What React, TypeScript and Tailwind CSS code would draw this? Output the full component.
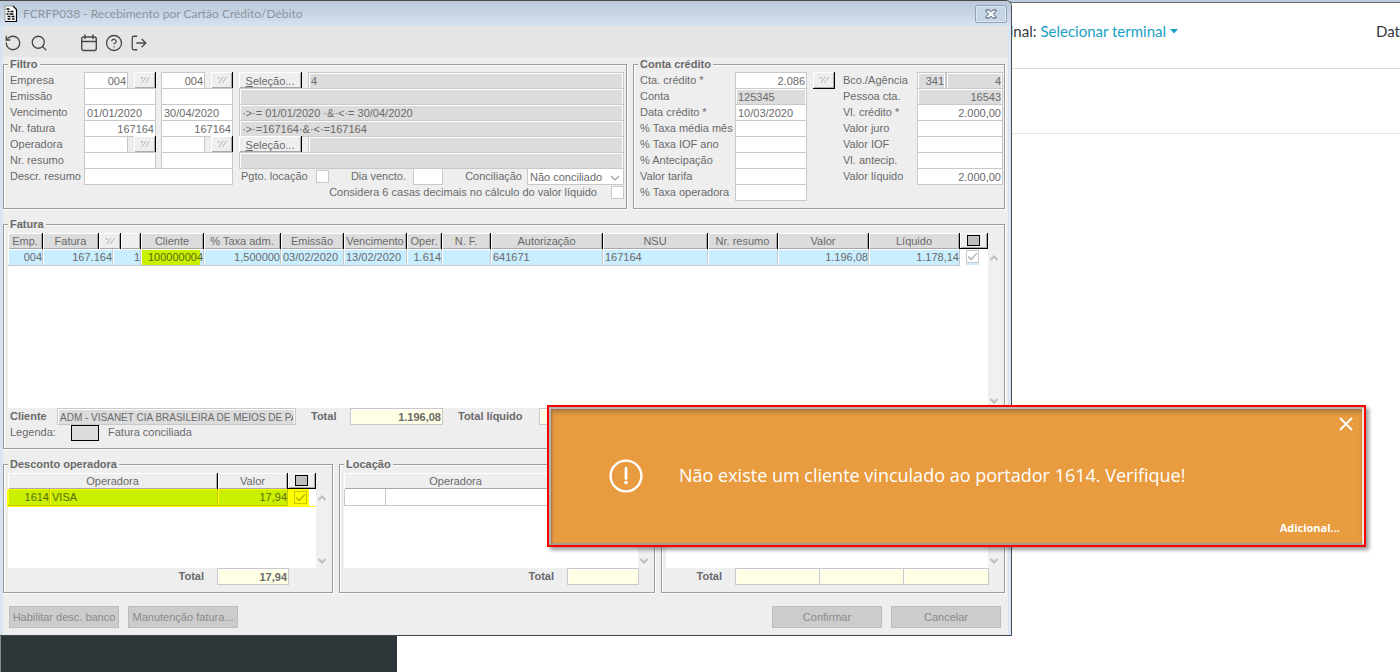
import React from "react";
import { RotateCcw, Search, CircleHelp, LogOut } from "lucide-react";
import clsx from "clsx";

type FieldProps = {
  label: string;
  value?: string;
  right?: boolean;
  gray?: boolean;
  total?: boolean;
  small?: boolean;
  className?: string;
};

function Field({ label, value = "", right, gray, total, small, className }: FieldProps) {
  return (
    <input
      aria-label={label}
      defaultValue={value}
      readOnly={gray || total}
      className={clsx(
        "block h-[17px] min-w-0 rounded-none border border-[#c8c8c8] pt-px leading-[14px] outline-none",
        small ? "text-[10px]" : "text-[11px]",
        right ? "pr-px pl-[2px] text-right" : "px-[2px]",
        gray && "bg-[#dcdcdc] shadow-[inset_1px_1px_0_#fff,inset_-1px_0_0_#fff]",
        total && "bg-[#ffffe6] font-bold shadow-[inset_1px_1px_0_#fff]",
        !gray && !total && "bg-white",
        className
      )}
    />
  );
}

function Wand() {
  return (
    <svg viewBox="0 0 10 8" className="h-2 w-[10px]" fill="none" stroke="#a2a2a2" strokeWidth="1">
      <path d="M1 1l1.6 2" />
      <path d="M5.8 1.2L2 6.8M9.4 1.2L5.6 6.8" strokeDasharray="1.8 0.7" />
    </svg>
  );
}

function LookupButton({ label, full }: { label: string; full?: boolean }) {
  return (
    <button
      type="button"
      aria-label={label}
      className={clsx(
        "flex w-[22px] shrink-0 items-center justify-center border-r border-black bg-[#eee] shadow-[inset_1px_1px_0_#fff,inset_-1px_-1px_0_#a8a8a8]",
        full ? "h-[17px] border-b" : "h-4"
      )}
    >
      <Wand />
    </button>
  );
}

function CheckBox({ label, checked, yellow }: { label: string; checked?: boolean; yellow?: boolean }) {
  return (
    <label className="relative block size-[13px] shrink-0">
      <input
        type="checkbox"
        aria-label={label}
        defaultChecked={checked}
        className={clsx(
          "peer block size-[13px] appearance-none border",
          yellow ? "border-[#c8c800] bg-[#ff0]" : "border-[#c8c8c8] bg-white"
        )}
      />
      <svg
        viewBox="0 0 13 13"
        className="pointer-events-none absolute inset-0 hidden size-[13px] peer-checked:block"
        fill="none"
        stroke={yellow ? "#b4b000" : "#b0b0b0"}
        strokeWidth="1.3"
      >
        <path d="M2.2 6.5l3 3L11 3.2" />
      </svg>
    </label>
  );
}

function Group({ title, className, children }: { title?: string; className?: string; children: React.ReactNode }) {
  return (
    <fieldset
      className={clsx(
        "min-w-0 border border-[#9c9c9c] pb-2 pl-1 shadow-[1px_1px_0_#fff,inset_1px_1px_0_#fff]",
        className
      )}
    >
      <legend className="h-[14px] bg-[#eee] px-[2px] text-[11px] leading-[14px] font-bold">{title}</legend>
      {children}
    </fieldset>
  );
}

function Row({ label, wide, children }: { label: string; wide?: boolean; children: React.ReactNode }) {
  return (
    <div className="flex h-4 items-start">
      <span className={clsx("shrink-0 whitespace-nowrap leading-4", wide ? "w-[95px]" : "w-[74px]")}>{label}</span>
      {children}
    </div>
  );
}

function RangeRow({ label, from = "", to = "", right, lookup }: { label: string; from?: string; to?: string; right?: boolean; lookup?: boolean }) {
  return (
    <Row label={label}>
      <div className="flex gap-[5px]">
        {[from, to].map((v, i) => (
          <div key={i} className="flex w-[72px] justify-between">
            <Field
              label={label + (i ? " final" : " inicial")}
              value={v}
              right={right}
              className={lookup ? "w-[44px]" : "w-full"}
            />
            {lookup && <LookupButton label={"Buscar " + label} />}
          </div>
        ))}
      </div>
    </Row>
  );
}

function SelectButton() {
  return (
    <button
      type="button"
      className="h-4 w-[63px] shrink-0 border-r border-black bg-[#eee] pt-[2px] text-center leading-[14px] shadow-[inset_1px_1px_0_#fff,inset_-1px_-1px_0_#a8a8a8]"
    >
      <span className="underline">S</span>eleção...
    </button>
  );
}

function Th({ children, span = 1, light }: { children?: React.ReactNode; span?: number; light?: boolean }) {
  return (
    <th
      colSpan={span}
      className={clsx(
        "h-4 overflow-hidden border-r border-black p-0 text-center leading-[15px] font-normal whitespace-nowrap shadow-[inset_1px_1px_0_#fff,inset_-1px_-1px_0_#a8a8a8]",
        light ? "bg-[#eee]" : "bg-[#dcdcdc]"
      )}
    >
      {children}
    </th>
  );
}

function AllButton() {
  return (
    <th className="h-4 border-r border-b border-black bg-[#eee] p-0 shadow-[inset_1px_1px_0_#fff,inset_-1px_-1px_0_#a8a8a8]">
      <button type="button" aria-label="Marcar todos" className="mx-auto block h-[11px] w-[13px] border border-black bg-[#bdbdbd]" />
    </th>
  );
}

function ScrollBar() {
  return (
    <div className="mt-4 flex w-[13px] shrink-0 flex-col items-center justify-between bg-[#f0f0f0] pt-[6px] pr-px pb-1">
      <svg viewBox="0 0 8 6" className="h-[6px] w-2" fill="none" stroke="#bdbdbd" strokeWidth="2">
        <path d="M0.5 5L4 1.5L7.5 5" />
      </svg>
      <svg viewBox="0 0 8 6" className="h-[6px] w-2" fill="none" stroke="#bdbdbd" strokeWidth="2">
        <path d="M0.5 1L4 4.5L7.5 1" />
      </svg>
    </div>
  );
}

const invoiceCols = [
  "w-[35px]", "w-[56px]", "w-[14px]", "w-[8px]", "w-[20px]", "w-[63px]", "w-[77px]", "w-[63px]", "w-[63px]",
  "w-[35px]", "w-[49px]", "w-[112px]", "w-[105px]", "w-[70px]", "w-[91px]", "w-[91px]", "w-[28px]",
];

const invoiceCells: { text: string; right?: boolean; span?: number; mark?: boolean }[] = [
  { text: "004", right: true },
  { text: "167.164", right: true, span: 2 },
  { text: "1", right: true, span: 2 },
  { text: "100000004", right: true, mark: true },
  { text: "1,500000", right: true },
  { text: "03/02/2020" },
  { text: "13/02/2020" },
  { text: "1.614", right: true },
  { text: "" },
  { text: "641671" },
  { text: "167164" },
  { text: "" },
  { text: "1.196,08", right: true },
  { text: "1.178,14", right: true },
];

function InvoiceTable() {
  return (
    <table className="w-full table-fixed border-separate border-spacing-0">
      <colgroup>
        {invoiceCols.map((c, i) => (
          <col key={i} className={c} />
        ))}
      </colgroup>
      <thead>
        <tr>
          <Th>Emp.</Th>
          <Th>Fatura</Th>
          <Th span={2} light>
            <span className="flex justify-center"><Wand /></span>
          </Th>
          <Th light />
          <Th>Cliente</Th>
          <Th>% Taxa adm.</Th>
          <Th>Emissão</Th>
          <Th>Vencimento</Th>
          <Th>Oper.</Th>
          <Th>N. F.</Th>
          <Th>Autorização</Th>
          <Th>NSU</Th>
          <Th>Nr. resumo</Th>
          <Th>Valor</Th>
          <Th>Líquido</Th>
          <AllButton />
        </tr>
      </thead>
      <tbody>
        <tr>
          {invoiceCells.map((c, i) => (
            <td
              key={i}
              colSpan={c.span ?? 1}
              className={clsx(
                "h-[17px] border-r border-b border-[#c8c8c8] py-0 leading-4 whitespace-nowrap shadow-[inset_1px_1px_0_#fff]",
                c.right ? "px-0 text-right" : "px-[2px]",
                c.mark ? "bg-[linear-gradient(90deg,#c8f000_59px,#c8eeff_59px)] text-[#5f6a10]" : "bg-[#c8eeff]"
              )}
            >
              {c.text}
            </td>
          ))}
          <td className="p-0 pl-[6px]">
            <div className="w-[13px] bg-[#c8eeff] pb-[2px]">
              <CheckBox label="Selecionar fatura 167.164" checked />
            </div>
          </td>
        </tr>
      </tbody>
    </table>
  );
}

const yellowCell = "h-[17px] border-r border-b border-[#c8c800] bg-[#c8f000] py-0 leading-4 text-[#5f6a10] shadow-[inset_1px_1px_0_#ff0]";

function FooterButton({ children }: { children: string }) {
  return (
    <button type="button" className="h-[22px] w-[110px] border border-[#bdbdbd] bg-[#ccc] text-[#8a8a8a] whitespace-nowrap">
      {children}
    </button>
  );
}

function FilterGroup() {
  return (
    <Group title="Filtro" className="pr-[2px]">
      <div className="flex gap-[6px] pt-px pl-[2px]">
        <div className="shrink-0">
          <RangeRow label="Empresa" from="004" to="004" right lookup />
          <RangeRow label="Emissão" />
          <RangeRow label="Vencimento" from="01/01/2020" to="30/04/2020" />
          <RangeRow label="Nr. fatura" from="167164" to="167164" right />
          <RangeRow label="Operadora" lookup />
          <RangeRow label="Nr. resumo" />
          <Row label="Descr. resumo">
            <Field label="Descr. resumo" className="w-[149px]" />
          </Row>
        </div>
        <div className="min-w-0 flex-1">
          <div className="flex h-4 items-start gap-[6px]">
            <SelectButton />
            <Field label="Seleção de empresa" value="4" gray className="flex-1" />
          </div>
          <div className="h-4"><Field label="Seleção de emissão" gray className="w-full" /></div>
          <div className="h-4"><Field label="Seleção de vencimento" value="·>·= 01/01/2020 ·&·<·= 30/04/2020" gray className="w-full" /></div>
          <div className="h-4"><Field label="Seleção de fatura" value="·>·=167164·&·<·=167164" gray className="w-full" /></div>
          <div className="flex h-4 items-start gap-[6px]">
            <SelectButton />
            <Field label="Seleção de operadora" gray className="flex-1" />
          </div>
          <div className="h-4"><Field label="Seleção de resumo" gray className="w-full" /></div>
          <div className="flex h-4 items-start justify-between pl-[2px] leading-4">
            <div className="flex items-start gap-2 whitespace-nowrap">
              Pgto. locação
              <div className="pt-[2px]"><CheckBox label="Pgto. locação" /></div>
            </div>
            <div className="flex items-start gap-[7px] whitespace-nowrap">
              Dia vencto.
              <Field label="Dia vencto." className="w-[30px]" />
            </div>
            <div className="flex items-start gap-[5px]">
              Conciliação
              <div className="relative">
                <select aria-label="Conciliação" className="block h-[17px] w-[97px] appearance-none rounded-none border border-[#c8c8c8] bg-white px-[2px] text-[11px] leading-[14px]">
                  <option>Não conciliado</option>
                </select>
                <svg viewBox="0 0 10 6" className="pointer-events-none absolute top-[7px] right-1 h-[6px] w-[10px]" fill="none" stroke="#a0a0a0" strokeWidth="1.2">
                  <path d="M1 1l4 4 4-4" />
                </svg>
              </div>
            </div>
          </div>
          <div className="flex h-4 items-start justify-end gap-[14px] leading-4 whitespace-nowrap">
            Considera 6 casas decimais no cálculo do valor líquido
            <div className="pt-[2px]"><CheckBox label="Considera 6 casas decimais no cálculo do valor líquido" /></div>
          </div>
        </div>
      </div>
    </Group>
  );
}

function AccountGroup() {
  return (
    <Group title="Conta crédito" className="pr-px">
      <div className="flex justify-between pt-px pl-[2px]">
        <div>
          <Row wide label="Cta. crédito *">
            <div className="flex gap-[6px]">
              <Field label="Cta. crédito" value="2.086" right className="w-[72px]" />
              <LookupButton label="Buscar conta" full />
            </div>
          </Row>
          <Row wide label="Conta"><Field label="Conta" value="125345" gray className="w-[72px]" /></Row>
          <Row wide label="Data crédito *"><Field label="Data crédito" value="10/03/2020" className="w-[72px]" /></Row>
          <Row wide label="% Taxa média mês"><Field label="% Taxa média mês" className="w-[72px]" /></Row>
          <Row wide label="% Taxa IOF ano"><Field label="% Taxa IOF ano" className="w-[72px]" /></Row>
          <Row wide label="% Antecipação"><Field label="% Antecipação" className="w-[72px]" /></Row>
          <Row wide label="Valor tarifa"><Field label="Valor tarifa" className="w-[72px]" /></Row>
          <Row wide label="% Taxa operadora"><Field label="% Taxa operadora" className="w-[72px]" /></Row>
        </div>
        <div>
          <Row label="Bco./Agência">
            <Field label="Banco" value="341" right gray className="w-[29px]" />
            <Field label="Agência" value="4" right gray className="w-[57px]" />
          </Row>
          <Row label="Pessoa cta."><Field label="Pessoa cta." value="16543" right gray className="w-[86px]" /></Row>
          <Row label="Vl. crédito *"><Field label="Vl. crédito" value="2.000,00" right className="w-[86px]" /></Row>
          <Row label="Valor juro"><Field label="Valor juro" className="w-[86px]" /></Row>
          <Row label="Valor IOF"><Field label="Valor IOF" className="w-[86px]" /></Row>
          <Row label="Vl. antecip."><Field label="Vl. antecip." className="w-[86px]" /></Row>
          <Row label="Valor líquido"><Field label="Valor líquido" value="2.000,00" right className="w-[86px]" /></Row>
        </div>
      </div>
    </Group>
  );
}

function InvoiceGroup() {
  return (
    <Group title="Fatura" className="pr-[3px]">
      <div className="flex h-[177px] pt-[2px]">
        <div className="min-w-0 flex-1 bg-[linear-gradient(#eee_16px,#fff_16px)]">
          <InvoiceTable />
        </div>
        <ScrollBar />
      </div>
      <div className="flex h-4 items-start pl-[2px] leading-4">
        <b className="w-[47px] shrink-0">Cliente</b>
        <Field label="Cliente" value="ADM - VISANET CIA BRASILEIRA DE MEIOS DE PAGAMENTO" gray small className="w-[239px]" />
        <b className="ml-[15px] w-[39px] shrink-0">Total</b>
        <Field label="Total" value="1.196,08" right total className="w-[93px]" />
        <b className="ml-[15px] w-[81px] shrink-0">Total líquido</b>
        <Field label="Total líquido" value="1.178,14" right total className="w-[93px]" />
      </div>
      <div className="flex h-4 items-start pl-[2px] leading-4">
        <span className="w-[61px]">Legenda:</span>
        <span className="mt-px h-4 w-7 border border-black bg-[#dcdcdc]" />
        <span className="ml-[9px]">Fatura conciliada</span>
      </div>
    </Group>
  );
}

function DiscountGroup() {
  return (
    <Group title="Desconto operadora" className="pr-[3px]">
      <div className="flex h-[97px] pt-[2px]">
        <div className="min-w-0 flex-1 bg-[linear-gradient(#eee_16px,#fff_16px)]">
          <table className="w-full table-fixed border-separate border-spacing-0">
            <colgroup>
              <col className="w-[42px]" />
              <col className="w-[168px]" />
              <col className="w-[70px]" />
              <col className="w-[28px]" />
            </colgroup>
            <thead>
              <tr>
                <Th span={2} light>Operadora</Th>
                <Th light>Valor</Th>
                <AllButton />
              </tr>
            </thead>
            <tbody>
              <tr className="shadow-[-1px_1px_0_#ff0]">
                <td className={clsx(yellowCell, "px-0 text-right")}>1614</td>
                <td className={clsx(yellowCell, "px-[2px]")}>VISA</td>
                <td className={clsx(yellowCell, "px-0 text-right")}>17,94</td>
                <td className="bg-[linear-gradient(90deg,#ff0_21px,#fff_21px)] p-0 pl-[6px]">
                  <CheckBox label="Selecionar VISA" checked yellow />
                </td>
              </tr>
            </tbody>
          </table>
        </div>
        <ScrollBar />
      </div>
      <div className="flex h-4 items-start justify-end gap-[13px] pr-10 leading-4">
        <b>Total</b>
        <Field label="Total desconto" value="17,94" right total className="w-[72px]" />
      </div>
    </Group>
  );
}

function RentalGroup() {
  return (
    <Group title="Locação" className="pr-[3px]">
      <div className="flex h-[97px] pt-[2px]">
        <div className="min-w-0 flex-1 bg-[linear-gradient(#eee_16px,#fff_16px)]">
          <table className="w-full table-fixed border-separate border-spacing-0">
            <colgroup>
              <col className="w-[42px]" />
              <col className="w-[182px]" />
              <col className="w-[71px]" />
            </colgroup>
            <thead>
              <tr>
                <Th span={2} light>Operadora</Th>
                <Th light>Valor</Th>
              </tr>
            </thead>
            <tbody>
              <tr>
                <td className="h-[17px] border-x border-b border-[#c8c8c8] p-0" />
                <td className="border-r border-b border-[#c8c8c8] p-0" />
                <td className="border-r border-b border-[#c8c8c8] p-0" />
              </tr>
            </tbody>
          </table>
        </div>
        <ScrollBar />
      </div>
      <div className="flex h-4 items-start justify-end gap-[13px] pr-3 leading-4">
        <b>Total</b>
        <Field label="Total locação" total className="w-[72px]" />
      </div>
    </Group>
  );
}

function SummaryGroup() {
  return (
    <Group className="pr-[3px]">
      <div className="flex h-[97px] pt-[2px]">
        <div className="min-w-0 flex-1 bg-white" />
        <ScrollBar />
      </div>
      <div className="flex h-4 items-start justify-end gap-[13px] pr-3 leading-4">
        <b>Total</b>
        <div className="flex">
          <Field label="Total 1" total className="-mr-px w-[85px]" />
          <Field label="Total 2" total className="-mr-px w-[85px]" />
          <Field label="Total 3" total className="w-[86px]" />
        </div>
      </div>
    </Group>
  );
}

function ReceiptWindow() {
  return (
    <section className="absolute top-0 left-0 w-[1012px] overflow-hidden rounded-tr-[6px] border-t border-r border-b border-[#4a4a4a] bg-[#d7e4f2] font-['Liberation_Sans',Arial,sans-serif] text-[11px] text-[#6a6a6a]">
      <header className="flex h-[25px] items-center bg-linear-to-b from-[#bac8d9] to-[#d5e2f0] pr-1 pl-1">
        <svg viewBox="0 0 14 18" className="h-[18px] w-[14px]">
          <path d="M1 1h8l3 3v13H1z" fill="#fff" />
          <path d="M1 1h8M1 1v15" stroke="#999" fill="none" />
          <path d="M1 16.5h11.5V4.5L9 1" stroke="#000" fill="none" strokeWidth="1.2" />
          <path d="M2.5 4h3M3.5 6.5h2M6.5 6.5h3M2.5 9h2M5.5 9h4M3.5 11.5h3M7.5 11.5h3M3.5 14h3M8 14h2.5" stroke="#000" strokeWidth="1.3" />
        </svg>
        <h1 className="ml-[5px] flex-1 pt-px font-['Lato','Open_Sans',sans-serif] text-[12px] text-[#8b939d]">
          FCRFP038 - Recebimento por Cartão Crédito/Débito
        </h1>
        <button type="button" aria-label="Fechar janela" className="flex h-[18px] w-8 items-center justify-center rounded-[2px] border border-[#93a2b5] bg-[#c6d5e6] shadow-[inset_0_0_0_1px_#dce7f3]">
          <svg viewBox="0 0 12 10" className="h-[10px] w-3" fill="#f2f5f9" stroke="#4c5564" strokeWidth="1">
            <path d="M1 1h3.2L6 2.8 7.8 1H11v1.4L8.4 5 11 7.6V9H7.8L6 7.2 4.2 9H1V7.6L3.6 5 1 2.4z" />
          </svg>
        </button>
      </header>
      <div className="border-x-[3px] border-b border-[#d7e4f2] bg-[#eee]">
        <div className="flex h-[31px] items-center bg-[#e5e5e5] pt-[2px] pl-px text-[#484848]">
          <button type="button" aria-label="Desfazer"><RotateCcw size={18} strokeWidth={1.7} /></button>
          <button type="button" aria-label="Pesquisar" className="ml-2"><Search size={18} strokeWidth={1.7} /></button>
          <button type="button" aria-label="Calendário" className="ml-8">
            <svg viewBox="0 0 18 18" className="size-[18px]" fill="none" stroke="currentColor" strokeWidth="1.4" strokeLinecap="round">
              <rect x="1.7" y="3" width="14.6" height="13.5" rx="2" />
              <path d="M1.7 7.5h14.6M5 1v3.5M13 1v3.5" />
            </svg>
          </button>
          <button type="button" aria-label="Ajuda" className="ml-[7px]"><CircleHelp size={18} strokeWidth={1.7} /></button>
          <button type="button" aria-label="Sair" className="ml-[7px]"><LogOut size={18} strokeWidth={1.7} /></button>
        </div>
        <div className="pr-[3px]">
          <div className="grid grid-cols-[624fr_372fr] gap-[6px]">
            <FilterGroup />
            <AccountGroup />
          </div>
          <div className="pt-2"><InvoiceGroup /></div>
          <div className="grid grid-cols-[330fr_316fr_344fr] gap-[6px] pt-2">
            <DiscountGroup />
            <RentalGroup />
            <SummaryGroup />
          </div>
          <footer className="flex gap-[9px] pt-[13px] pr-1 pb-[6px] pl-[6px]">
            <FooterButton>Habilitar desc. banco</FooterButton>
            <FooterButton>Manutenção fatura...</FooterButton>
            <span className="flex-1" />
            <FooterButton>Confirmar</FooterButton>
            <FooterButton>Cancelar</FooterButton>
          </footer>
        </div>
      </div>
    </section>
  );
}

function Toast() {
  return (
    <div
      role="alert"
      className="absolute top-[405px] left-[547px] w-[819px] border-2 border-[#f00] bg-[#e99b3f] font-['Open_Sans','Noto_Sans',sans-serif] text-white shadow-[3px_3px_4px_rgba(0,0,0,0.4)]"
    >
      <div className="flex h-[138px] flex-col justify-between border-2 border-t-[#b5b5b5] border-r-[#f0e6dc] border-b-[#a89c90] border-l-[#b5b5b5] pt-2 pb-[7px] shadow-[inset_0_4px_4px_-1px_rgba(110,90,70,0.55),inset_2px_0_2px_-1px_rgba(110,90,70,0.5)]">
        <button type="button" aria-label="Fechar" className="mr-[9px] self-end">
          <svg viewBox="0 0 14 14" className="size-[14px]" fill="none" stroke="currentColor" strokeWidth="2">
            <path d="M1 1l12 12M13 1L1 13" />
          </svg>
        </button>
        <div className="flex items-center gap-9 pl-[58px]">
          <svg viewBox="0 0 34 34" className="size-[34px]" fill="none" stroke="currentColor">
            <circle cx="17" cy="17" r="15.4" strokeWidth="2.4" />
            <path d="M17 9.5v10" strokeWidth="2.8" strokeLinecap="round" />
            <circle cx="17" cy="23.5" r="1.8" fill="currentColor" stroke="none" />
          </svg>
          <p className="text-[18px] whitespace-nowrap">Não existe um cliente vinculado ao portador 1614. Verifique!</p>
        </div>
        <a href="#" className="mr-[22px] self-end text-[11px] leading-4 font-bold">Adicional...</a>
      </div>
    </div>
  );
}

export default function App() {
  return (
    <div className="relative min-h-screen overflow-hidden bg-white">
      <div className="h-[3px] border-b border-[#6e6e6e] bg-[#bccbe0]" />
      <div className="flex min-h-[calc(100vh-3px)]">
        <aside className="w-[397px] shrink-0 border-l border-[#8a8a8a] bg-[#2c3639]" />
        <main className="min-w-0 flex-1 overflow-hidden bg-white font-['Lato','Open_Sans',sans-serif] text-[15px] text-[#33383d]">
          <header className="flex h-[66px] items-center overflow-hidden border-b border-[#dcdcdc] pb-2 pl-[580px] whitespace-nowrap">
            <span className="shrink-0">Terminal:</span>
            <button type="button" className="ml-1 flex shrink-0 items-center gap-1 text-[#17a0c4]">
              Selecionar terminal
              <svg viewBox="0 0 8 5" className="h-[5px] w-2" fill="currentColor"><path d="M0 0h8L4 4.5z" /></svg>
            </button>
            <span className="ml-[198px] shrink-0">Data</span>
          </header>
          <div className="h-[65px] border-b border-[#e4e4e4]" />
        </main>
      </div>
      <ReceiptWindow />
      <Toast />
    </div>
  );
}
